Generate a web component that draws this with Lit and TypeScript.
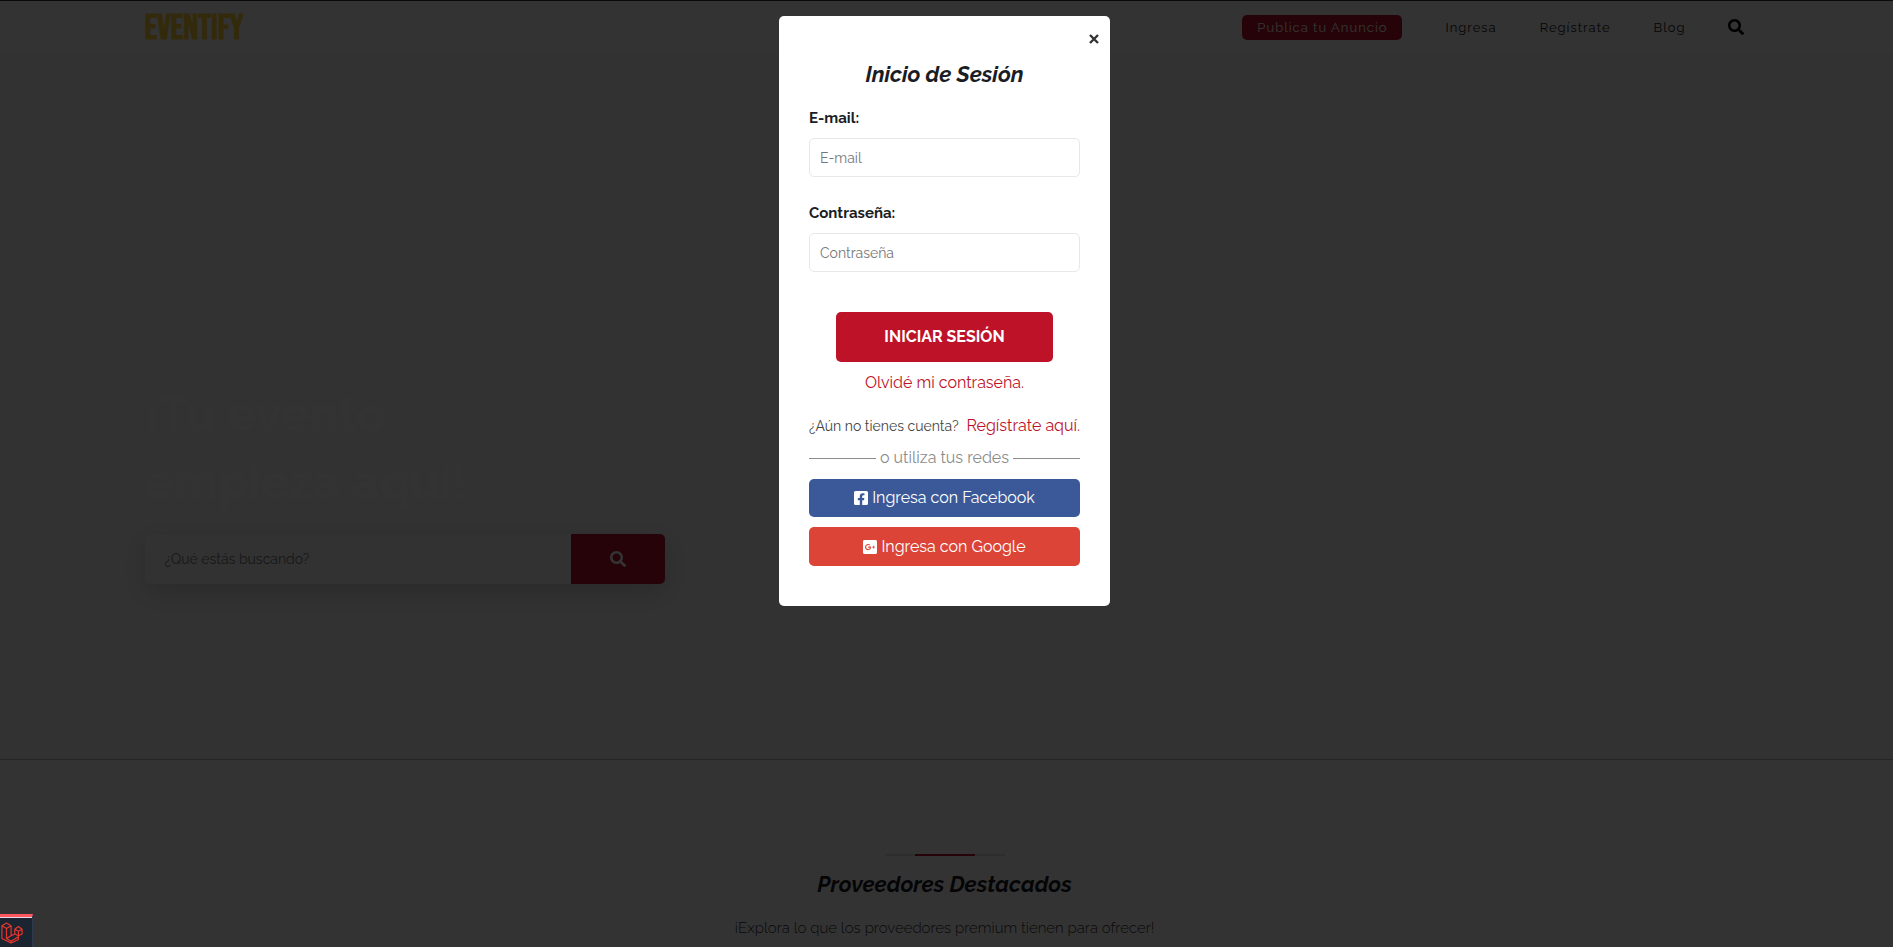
import { LitElement, html, css, svg } from "lit";
import { customElement, state } from "lit/decorators.js";

const searchPath =
  "M505 442.7L405.3 343c-4.500-4.500-10.600-7-17-7H372c27.600-35.300 44-79.700 44-128C416 93.100 322.900 0 208 0S0 93.100 0 208s93.100 208 208 208c48.300 0 92.700-16.400 128-44v16.300c0 6.400 2.500 12.500 7 17l99.700 99.700c9.400 9.400 24.600 9.400 33.900 0l28.300-28.300c9.400-9.400 9.400-24.600.1-34zM208 336c-70.700 0-128-57.200-128-128 0-70.700 57.200-128 128-128 70.700 0 128 57.200 128 128 0 70.700-57.200 128-128 128z";

const searchIcon = svg`<svg class="icon" viewBox="0 0 512 512" aria-hidden="true"><path d=${searchPath} /></svg>`;

const facebookIcon = svg`<svg class="brand" viewBox="0 0 448 448" aria-hidden="true"><path d="M400 0H48A48 48 0 0 0 0 48v352a48 48 0 0 0 48 48h137.250V295.690h-63V224h63v-54.640c0-62.150 37-96.480 93.670-96.480 27.140 0 55.520 4.840 55.520 4.840v61h-31.270c-30.810 0-40.420 19.120-40.420 38.730V224h68.780l-11 71.690h-57.780V448H400a48 48 0 0 0 48-48V48a48 48 0 0 0-48-48z"/></svg>`;

const googleIcon = svg`<svg class="brand" viewBox="0 0 448 448" aria-hidden="true"><path d="M400 0H48C21.500 0 0 21.500 0 48v352c0 26.500 21.500 48 48 48h352c26.500 0 48-21.500 48-48V48c0-26.500-21.500-48-48-48zM164 324c-55.300 0-100-44.700-100-100s44.700-100 100-100c27 0 49.500 9.800 67 26.200l-27.100 26.100c-7.400-7.100-20.300-15.400-39.800-15.400-34.100 0-61.900 28.200-61.900 63.200 0 34.900 27.800 63.200 61.900 63.200 39.600 0 54.400-28.500 56.800-43.100H164v-34.400h94.400c1 5 1.600 10.100 1.600 16.600 0 57.100-38.300 97.600-96 97.600zm220-81.800h-29v29h-29.200v-29h-29V213h29v-29H355v29h29v29.200z"/></svg>`;

@customElement("app-root")
export class AppRoot extends LitElement {
  @state() private open = true;

  static styles = css`
    :host {
      display: block;
      min-height: 100vh;
      box-sizing: border-box;
      background: #fff;
      color: #1a1d24;
      font-family: Raleway, Lato, "Open Sans", sans-serif;
      font-size: 16px;
      line-height: 24px;
    }
    *, *::before, *::after { box-sizing: border-box; }
    a { color: inherit; text-decoration: none; }
    button { font: inherit; border: 0; cursor: pointer; }
    .page { border-top: 1px solid #333; }
    .header, .hero, .featured { padding-right: 4px; }
    .wrap { width: 84.7%; margin: 0 auto; }
    .header { background: #fff; }
    .bar { display: flex; align-items: center; height: 52px; }
    .logo {
      padding-top: 4px;
      color: #fcd23c;
      font: 700 35px/32px "Bebas Neue", Anton, Oswald, "Roboto Condensed", "Liberation Sans Narrow", "DejaVu Sans Condensed", sans-serif;
    }
    .nav {
      display: flex;
      align-items: center;
      gap: 43px;
      margin-left: auto;
      font-size: 13px;
      line-height: 25px;
      letter-spacing: 1px;
    }
    .publish { background: #be1229; color: #fff; border-radius: 5px; padding: 0 15px; }
    .icon { display: block; width: 16px; height: 16px; fill: currentColor; }
    .plain { background: none; padding: 0; color: #000; }
    .hero { background: #f8f8f8; border-bottom: 1px solid #b8b8b8; padding-top: 327px; padding-bottom: 175px; }
    .hero h1 { margin: 0 0 18px; color: #fff; font-size: 48px; line-height: 68px; font-weight: 700; }
    .search { display: flex; width: 520px; height: 50px; border-radius: 5px; box-shadow: 0 8px 24px rgba(0, 0, 0, .15); }
    .search input { flex: 1; min-width: 0; border: 0; background: #fafafa; border-radius: 5px 0 0 5px; padding: 0 20px; font: 14px/24px Raleway, Lato, sans-serif; }
    .search input::placeholder { color: #777; opacity: 1; }
    .search button { width: 94px; display: grid; place-items: center; background: #be1229; color: #fff; border-radius: 0 5px 5px 0; padding: 0; }
    .featured { padding-top: 94px; padding-bottom: 24px; text-align: center; }
    .rule { width: 120px; height: 2px; margin: 0 auto; background: #e0e0e0; }
    .rule span { display: block; width: 60px; height: 2px; margin: 0 auto; background: #be1229; }
    h2 { margin: 0; font-size: 22px; line-height: 32px; font-weight: 700; font-style: italic; }
    .featured h2 { margin: 12px 0 16px; }
    .featured p { margin: 0; font-size: 15px; line-height: 24px; font-weight: 300; color: #333; }

    .overlay { position: fixed; inset: 0; background: rgba(0, 0, 0, .8); padding: 16px 20px 16px 16px; overflow: hidden; }
    .modal { width: 331px; margin: 0 auto; padding: 13px 30px 40px; background: #fff; border-radius: 5px; }
    .closer { display: flex; justify-content: flex-end; height: 20px; margin-right: -20px; }
    .close { width: 12px; height: 20px; padding: 5px 0; background: none; color: #333; }
    .close svg { display: block; width: 10px; height: 10px; margin: 0 auto; stroke: currentColor; stroke-width: 2.400; }
    .modal h2 { text-align: center; margin: 9px 0 16px; }
    .field { display: block; font-weight: 700; font-size: 15px; line-height: 24px; margin-bottom: 8px; }
    .box { display: block; width: 100%; height: 39px; margin-bottom: 24px; padding: 0 10px; border: 1px solid #e8e8e8; border-radius: 5px; font: 14px/24px Raleway, Lato, sans-serif; }
    .box::placeholder { color: #777; opacity: 1; }
    .submit { display: block; width: 80%; height: 50px; margin: 40px auto 9px; background: #be1229; color: #fff; border-radius: 5px; font-weight: 700; }
    .center { text-align: center; }
    .red { color: #be1229; }
    .signup { display: flex; justify-content: space-between; white-space: nowrap; margin: 19px 0 8px; }
    .signup span { font-size: 14px; color: #444; }
    .or { display: flex; align-items: center; gap: 4px; color: #8c8c8c; margin-bottom: 9px; }
    .or::before, .or::after { content: ""; flex: 1; height: 1px; background: #8c8c8c; }
    .social { display: flex; align-items: center; justify-content: center; gap: 4px; height: 38px; color: #fff; border-radius: 5px; margin-bottom: 10px; }
    .social:last-child { margin-bottom: 0; }
    .facebook { background: #3b5998; }
    .google { background: #db4437; height: 39px; }
    .brand { width: 14px; height: 14px; fill: currentColor; }
    .debug { position: fixed; left: 0; bottom: 0; width: 33px; height: 33px; padding: 5px 1px; background: #1b2431; border: 0; border-top: 3px solid #ff5860; border-right: 1px solid #2e3a50; box-shadow: inset 0 1px #ddd; }
    .debug svg { display: block; width: 22px; height: 22px; fill: none; stroke: #e8362d; stroke-width: 1.300; stroke-linejoin: round; }
  `;

  render() {
    return html`
      <div class="page">
        <header class="header">
          <div class="wrap bar">
            <a class="logo" href="#">EVENTIFY</a>
            <nav class="nav">
              <a class="publish" href="#">Publica tu Anuncio</a>
              <a href="#" @click=${() => (this.open = true)}>Ingresa</a>
              <a href="#">Regístrate</a>
              <a href="#">Blog</a>
              <button class="plain" aria-label="Buscar">${searchIcon}</button>
            </nav>
          </div>
        </header>
        <section class="hero">
          <div class="wrap">
            <h1>¡Tu evento<br />empieza aquí!</h1>
            <form class="search" @submit=${(e: Event) => e.preventDefault()}>
              <input type="text" aria-label="Buscar" placeholder="¿Qué estás buscando?" />
              <button aria-label="Buscar">${searchIcon}</button>
            </form>
          </div>
        </section>
        <section class="featured">
          <div class="rule"><span></span></div>
          <h2>Proveedores Destacados</h2>
          <p>¡Explora lo que los proveedores premium tienen para ofrecer!</p>
        </section>
      </div>
      ${this.open ? this.renderLogin() : null}
      <button class="debug" aria-label="Debugbar">
        <svg viewBox="0 0 24 24">
          <path d="M1 4l5-3 5 3v11l4-2V8l4-3 4 3v5l-4 2v4l-8 4-10-5zM1 4l5 3 5-3M6 7v11l5-3M6 18l5 3 8-5M11 21v2M15 8l4 2 4-2M19 10v5l-4-2M11 15l4-2" />
        </svg>
      </button>
    `;
  }

  private renderLogin() {
    return html`
      <div class="overlay">
        <form class="modal" role="dialog" aria-label="Inicio de Sesión" @submit=${(e: Event) => e.preventDefault()}>
          <div class="closer">
            <button class="close" type="button" aria-label="Cerrar" @click=${() => (this.open = false)}>
              <svg viewBox="0 0 10 10"><path d="M1 1l8 8M9 1l-8 8" /></svg>
            </button>
          </div>
          <h2>Inicio de Sesión</h2>
          <label class="field" for="email">E-mail:</label>
          <input class="box" id="email" type="email" placeholder="E-mail" />
          <label class="field" for="password">Contraseña:</label>
          <input class="box" id="password" type="password" placeholder="Contraseña" />
          <button class="submit">INICIAR SESIÓN</button>
          <div class="center"><a class="red" href="#">Olvidé mi contraseña.</a></div>
          <div class="signup"><span>¿Aún no tienes cuenta?</span><a class="red" href="#">Regístrate aquí.</a></div>
          <div class="or">o utiliza tus redes</div>
          <a class="social facebook" href="#">${facebookIcon}<span>Ingresa con Facebook</span></a>
          <a class="social google" href="#">${googleIcon}<span>Ingresa con Google</span></a>
        </form>
      </div>
    `;
  }
}
